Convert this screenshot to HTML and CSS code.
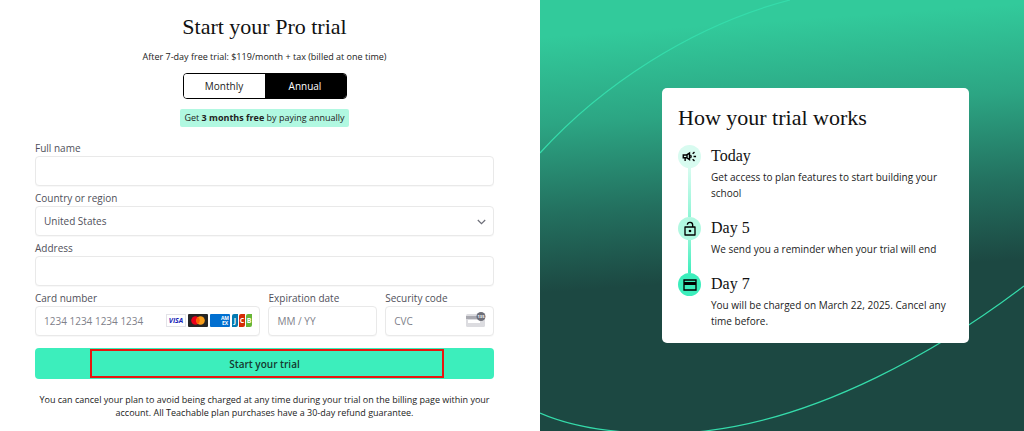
FILE: index.html
```
<!DOCTYPE html>
<html lang="en">
<head>
    <meta charset="UTF-8">
    <meta name="viewport" content="width=device-width, initial-scale=1.0">
    <title>Start your Pro trial</title>
    <link rel="stylesheet" href="styles.css">
</head>
<body>
    <div class="page">
        <main class="checkout">
            <h1>Start your Pro trial</h1>
            <p class="price">After 7-day free trial: $119/month + tax (billed at one time)</p>

            <div class="toggle">
                <button type="button">Monthly</button>
                <button type="button" class="active">Annual</button>
            </div>
            <p class="badge">Get <strong>3 months free</strong> by paying annually</p>

            <form class="form">
                <div class="field">
                    <label for="name">Full name</label>
                    <input type="text" id="name">
                </div>
                <div class="field">
                    <label for="country">Country or region</label>
                    <div class="control">
                        <select id="country">
                            <option>United States</option>
                        </select>
                        <svg class="chevron" width="9" height="6" viewBox="0 0 9 6"><path d="M.8 1l3.700 3.600L8.200 1" fill="none" stroke="#6d6e78" stroke-width="1.2"/></svg>
                    </div>
                </div>
                <div class="field">
                    <label for="address">Address</label>
                    <input type="text" id="address">
                </div>
                <div class="card-row">
                    <div class="field">
                        <label for="card">Card number</label>
                        <div class="control">
                            <input type="text" id="card" placeholder="1234 1234 1234 1234">
                            <div class="brands">
                                <svg width="20" height="13" viewBox="0 0 20 13">
                                    <rect x=".5" y=".5" width="19" height="12" fill="#fff" stroke="#e3e3e8"/>
                                    <text x="10" y="9" class="visa">VISA</text>
                                </svg>
                                <svg width="20" height="13" viewBox="0 0 20 13">
                                    <rect width="20" height="13" rx="1" fill="#252525"/>
                                    <circle cx="7.5" cy="6.5" r="4.3" fill="#eb001b"/>
                                    <circle cx="12.5" cy="6.5" r="4.3" fill="#f79e1b"/>
                                    <path d="M10 3a4.3 4.3 0 0 1 0 7 4.3 4.3 0 0 1 0-7z" fill="#ff5f00"/>
                                </svg>
                                <svg width="20" height="13" viewBox="0 0 20 13">
                                    <rect width="20" height="13" rx="1" fill="#016fd0"/>
                                    <text x="15" y="6" class="amex">AM</text>
                                    <text x="15" y="11" class="amex">EX</text>
                                </svg>
                                <svg width="20" height="13" viewBox="0 0 20 13">
                                    <path d="M2 0h4v11a2 2 0 0 1-2 2H0V2a2 2 0 0 1 2-2z" fill="#047ab1"/>
                                    <path d="M9 0h4v11a2 2 0 0 1-2 2H7V2a2 2 0 0 1 2-2z" fill="#d42d06"/>
                                    <path d="M16 0h4v11a2 2 0 0 1-2 2h-4V2a2 2 0 0 1 2-2z" fill="#67b637"/>
                                    <text x="3" y="9" class="jcb">J</text>
                                    <text x="10" y="9" class="jcb">C</text>
                                    <text x="17" y="9" class="jcb">B</text>
                                </svg>
                            </div>
                        </div>
                    </div>
                    <div class="field">
                        <label for="expiry">Expiration date</label>
                        <input type="text" id="expiry" placeholder="MM / YY">
                    </div>
                    <div class="field">
                        <label for="cvc">Security code</label>
                        <div class="control">
                            <input type="text" id="cvc" placeholder="CVC">
                            <svg class="cvc-icon" width="20" height="15" viewBox="0 0 20 15">
                                <rect y="2" width="19" height="13" rx="1.5" fill="#dcdce0"/>
                                <rect y="4" width="19" height="3" fill="#a9a9b0"/>
                                <rect x="2" y="8" width="12" height="3" fill="#fff"/>
                                <circle cx="15" cy="4.5" r="4.5" fill="#6d6e78"/>
                                <text x="15" y="6" class="cvc-digits">135</text>
                            </svg>
                        </div>
                    </div>
                </div>
                <button type="submit" class="submit">Start your trial<span class="highlight"></span></button>
            </form>

            <p class="terms">You can cancel your plan to avoid being charged at any time during your trial on the billing page within your account. All Teachable plan purchases have a 30-day refund guarantee.</p>
        </main>

        <aside class="panel">
            <svg class="orbit" viewBox="0 0 484 431" preserveAspectRatio="none">
                <path d="M0 153C60 87 150 26 250 0"/>
                <path d="M484 286C400 350 280 418 165 431C125 436 50 435 0 413"/>
            </svg>
            <section class="card">
                <h2>How your trial works</h2>
                <ol class="steps">
                    <li>
                        <span class="dot">
                            <svg width="15" height="15" viewBox="0 0 24 24" fill="none" stroke="#000" stroke-width="2.2">
                                <path d="M2 9.500h5.500L12 6.500v10.500L7.500 14H2zM5 14v5M8 10v4M18.500 12h4M17 7.500l3-2.500M17 16.500l3 2.500"/>
                                <path d="M13.500 9.500a3.500 3.500 0 0 1 0 5"/>
                            </svg>
                        </span>
                        <div>
                            <h3>Today</h3>
                            <p>Get access to plan features to start building your school</p>
                        </div>
                    </li>
                    <li>
                        <span class="dot">
                            <svg width="16" height="16" viewBox="0 0 24 24">
                                <path d="M4.500 9h15v12h-15zM16 9V6.500a4 4 0 0 0-8-.8" fill="none" stroke="#000" stroke-width="2" stroke-linejoin="round"/>
                                <circle cx="12" cy="15" r="2"/>
                            </svg>
                        </span>
                        <div>
                            <h3>Day 5</h3>
                            <p>We send you a reminder when your trial will end</p>
                        </div>
                    </li>
                    <li>
                        <span class="dot">
                            <svg width="16" height="16" viewBox="0 0 24 24">
                                <path d="M3 4.500h18v15H3z" fill="none" stroke="#000" stroke-width="2"/>
                                <path d="M3 7.500h18v4.500H3z"/>
                            </svg>
                        </span>
                        <div>
                            <h3>Day 7</h3>
                            <p>You will be charged on March 22, 2025. Cancel any time before.</p>
                        </div>
                    </li>
                </ol>
            </section>
        </aside>
    </div>
</body>
</html>
```
FILE: styles.css
```
* {
    box-sizing: border-box;
}
body {
    margin: 0;
    font-family: "Open Sans", "Noto Sans", sans-serif;
    font-size: 10px;
    color: #222;
    background: #fff;
}
h1, h2, h3, p {
    margin: 0;
}
h1, h2, h3 {
    font-family: "Liberation Serif", serif;
    font-weight: normal;
    color: #111;
}
button, input, select {
    font-family: inherit;
    font-size: 10px;
}
.page {
    display: grid;
    grid-template-columns: 540fr 484fr;
    min-height: 100vh;
}
.checkout {
    display: flex;
    flex-direction: column;
    align-items: center;
    padding: 15px 46px 0 35px;
}
h1 {
    font-size: 22px;
    line-height: 24px;
}
.price {
    margin-top: 11px;
    font-size: 9px;
    line-height: 13px;
}
.toggle {
    display: flex;
    width: 164px;
    height: 26px;
    margin-top: 10px;
    border: 1px solid #000;
    border-radius: 4px;
    overflow: hidden;
}
.toggle button {
    flex: 1;
    padding: 0;
    border: none;
    background: #fff;
    color: #222;
    cursor: pointer;
}
.toggle .active {
    background: #000;
    color: #fff;
}
.badge {
    margin-top: 10px;
    padding: 0 4px;
    border-radius: 2px;
    background: #b1f8e1;
    font-size: 9px;
    line-height: 18px;
}
.form {
    display: flex;
    flex-direction: column;
    gap: 5px;
    width: 100%;
    margin-top: 14px;
}
.field {
    display: flex;
    flex-direction: column;
    min-width: 0;
}
.field label {
    color: #50505a;
    line-height: 15px;
}
.field input,
.field select {
    width: 100%;
    height: 30px;
    padding: 0 8px;
    border: 1px solid #e9e9e9;
    border-radius: 4px;
    background: #fff;
    box-shadow: 0 1px 1px rgba(0, 0, 0, 0.03);
    color: #50505a;
    appearance: none;
}
.field input::placeholder {
    color: #80818a;
}
.control {
    position: relative;
}
.chevron {
    position: absolute;
    right: 8px;
    top: 13px;
}
.brands {
    position: absolute;
    right: 8px;
    top: 8px;
    display: flex;
    gap: 2px;
}
.cvc-icon {
    position: absolute;
    right: 8px;
    top: 6px;
}
.brands text,
.cvc-digits {
    font-family: "Open Sans", sans-serif;
    font-weight: bold;
    text-anchor: middle;
    fill: #fff;
}
.brands .visa {
    font-size: 7px;
    font-style: italic;
    fill: #1a1fb8;
}
.brands .amex {
    font-size: 5px;
}
.brands .jcb {
    font-size: 7px;
}
.cvc-digits {
    font-size: 4px;
}
.card-row {
    display: grid;
    grid-template-columns: 226fr 109fr 109fr;
    gap: 8px;
}
.submit {
    position: relative;
    height: 31px;
    margin-top: 7px;
    border: none;
    border-radius: 4px;
    background: #3ceebc;
    color: #15382f;
    font-weight: 600;
    cursor: pointer;
}
/* red frame drawn over the button */
.highlight {
    position: absolute;
    inset: 1px 11% 1px 12%;
    border: 2px solid #e8150f;
}
.terms {
    margin-top: 14px;
    font-size: 9px;
    line-height: 13px;
    text-align: center;
}
.panel {
    position: relative;
    padding: 88px 55px 0 122px;
    background: linear-gradient(176deg, #32ca9b 8%, #2ca583 27%, #23705f 46%, #1c4842 63%);
}
.orbit {
    position: absolute;
    inset: 0;
    width: 100%;
    height: 100%;
}
.orbit path {
    fill: none;
    stroke: #35dcab;
    stroke-width: 1.2;
}
.card {
    position: relative;
    padding: 16px 16px 14px;
    border-radius: 5px;
    background: #fff;
}
h2 {
    font-size: 22px;
    line-height: 28px;
}
.steps {
    margin: 13px 0 0;
    padding: 0;
    list-style: none;
}
.steps li {
    position: relative;
    display: flex;
    gap: 10px;
    padding-bottom: 16px;
}
.steps li:last-child {
    padding-bottom: 0;
}
.dot {
    display: flex;
    flex: none;
    align-items: center;
    justify-content: center;
    width: 23px;
    height: 23px;
    border-radius: 50%;
    background: #d8fbf0;
}
.steps li:nth-child(2) .dot {
    background: #b1f8e1;
}
.steps li:nth-child(3) .dot {
    background: #3ceebc;
}
/* line down to the next step */
.steps li:not(:last-child)::before {
    content: "";
    position: absolute;
    left: 10px;
    top: 23px;
    bottom: 0;
    width: 3px;
    background: linear-gradient(#d8fbf0, #8df5d5);
}
.steps li:nth-child(2)::before {
    background: linear-gradient(#8df5d5, #3ceebc);
}
h3 {
    font-size: 16px;
    line-height: 21px;
}
.steps p {
    margin-top: 3px;
    line-height: 16px;
}
```
